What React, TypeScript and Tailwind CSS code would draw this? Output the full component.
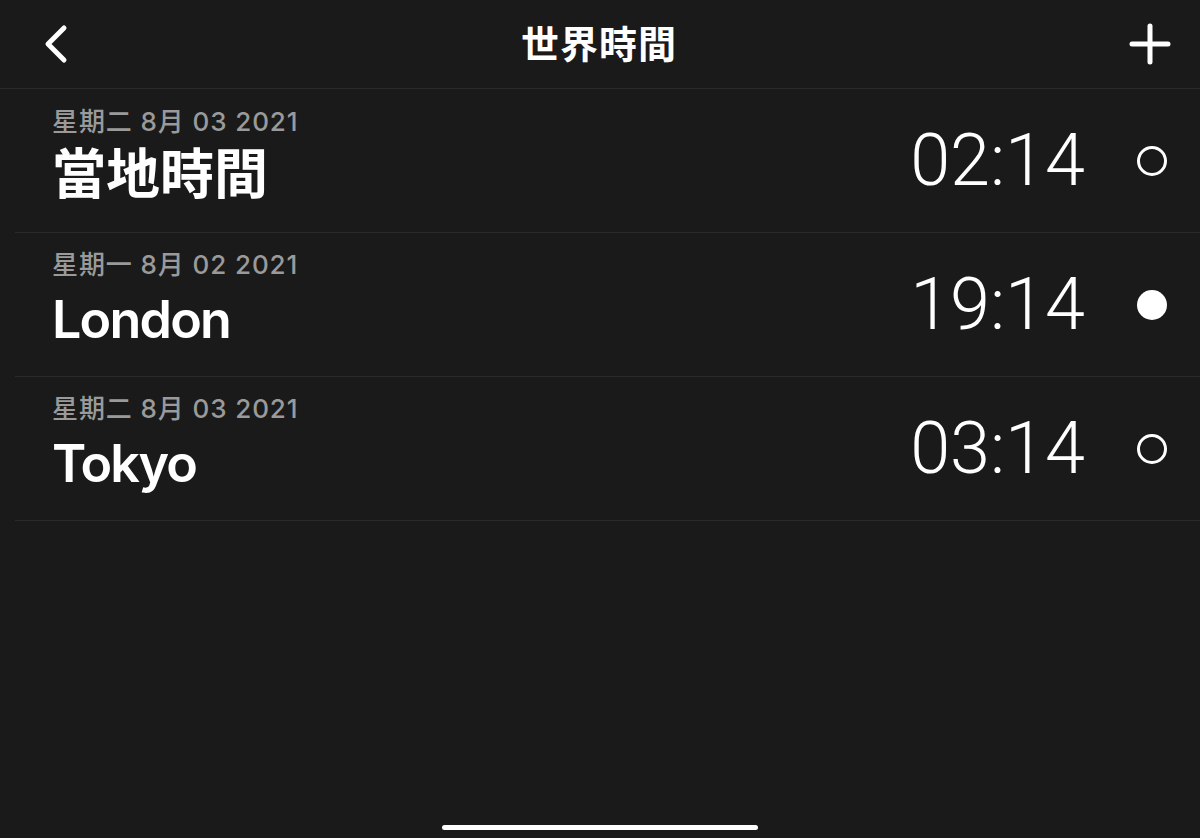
import React from 'react';

const cities = [
  { date: '星期二 8月 03 2021', name: '當地時間', time: '02:14', active: false, latin: false },
  { date: '星期一 8月 02 2021', name: 'London', time: '19:14', active: true, latin: true },
  { date: '星期二 8月 03 2021', name: 'Tokyo', time: '03:14', active: false, latin: true },
];

const sans = '"Inter", "Noto Sans CJK TC", sans-serif';

export default function App() {
  return (
    <div className="w-[1200px] h-[838px] bg-[#1a1a1a] text-white flex flex-col relative overflow-hidden" style={{ fontFamily: sans }}>
      <header className="h-[89px] shrink-0 border-b border-[#2a2a2a] flex items-center justify-between pl-[43px] pr-[29px]">
        <svg width="26" height="40" viewBox="0 0 26 40" fill="none">
          <path d="M21 4 L5 20 L21 36" stroke="white" strokeWidth="5" strokeLinecap="round" strokeLinejoin="round" />
        </svg>
        <h1 className="text-[38px] font-bold tracking-[1px] leading-none">世界時間</h1>
        <svg width="42" height="42" viewBox="0 0 42 42" fill="none">
          <path d="M21 3 V39 M3 21 H39" stroke="white" strokeWidth="5" strokeLinecap="round" />
        </svg>
      </header>

      <ul>
        {cities.map((c) => (
          <li key={c.time} className="ml-[15px] h-[144px] border-b border-[#2a2a2a] flex items-center pl-[37px] pr-[33px]">
            <div className="flex-1 flex flex-col pb-[6px]">
              <span className="text-[26px] leading-[30px] font-medium tracking-[0.9px] text-[#9a9a9a] -mt-[4px]">{c.date}</span>
              <span
                className={
                  c.latin
                    ? 'text-[52px] leading-[60px] font-semibold tracking-[-1.8px] mt-[10px]'
                    : 'text-[54px] leading-[60px] font-semibold mt-[8px]'
                }
              >
                {c.name}
              </span>
            </div>
            <span className="text-[72px] font-[350] leading-none mr-[52px]" style={{ fontFamily: '"Roboto", sans-serif' }}>
              {c.time}
            </span>
            {c.active ? (
              <span className="w-[30px] h-[30px] rounded-full bg-white" />
            ) : (
              <span className="w-[30px] h-[30px] rounded-full border-[3px] border-white" />
            )}
          </li>
        ))}
      </ul>

      <div className="absolute bottom-[8px] left-[442px] w-[316px] h-[5px] rounded-full bg-white" />
    </div>
  );
}
